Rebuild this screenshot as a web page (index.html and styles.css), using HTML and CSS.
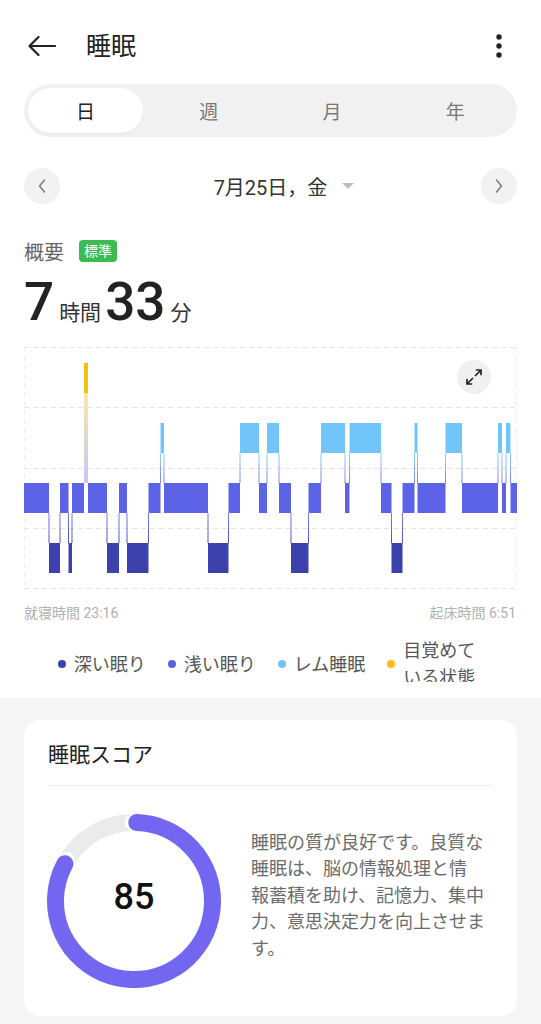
FILE: index.html
```html
<!DOCTYPE html>
<html lang="ja">
<head>
<meta charset="utf-8">
<title>睡眠</title>
<link rel="stylesheet" href="styles.css">
</head>
<body>
<div class="top">
  <header class="topbar">
    <svg class="back" viewBox="0 0 28 20" width="28" height="20"><path d="M1.5 10 H27 M10.5 1 L1.5 10 L10.5 19" fill="none" stroke="#222" stroke-width="2.2" stroke-linecap="round" stroke-linejoin="round"/></svg>
    <h1 class="title">睡眠</h1>
    <svg class="more" viewBox="0 0 8 26" width="8" height="26"><circle cx="4" cy="4" r="2.7" fill="#222"/><circle cx="4" cy="13" r="2.7" fill="#222"/><circle cx="4" cy="22" r="2.7" fill="#222"/></svg>
  </header>

  <nav class="tabs">
    <div class="tab active">日</div>
    <div class="tab">週</div>
    <div class="tab">月</div>
    <div class="tab">年</div>
  </nav>

  <div class="datebar">
    <div class="navbtn"><svg viewBox="0 0 8 14" width="8" height="14"><path d="M6.5 1 L1.5 7 L6.5 13" fill="none" stroke="#777" stroke-width="1.4" stroke-linecap="round" stroke-linejoin="round"/></svg></div>
    <div class="date"><span>7月25日，金</span><span class="caret"></span></div>
    <div class="navbtn"><svg viewBox="0 0 8 14" width="8" height="14"><path d="M1.5 1 L6.5 7 L1.5 13" fill="none" stroke="#777" stroke-width="1.4" stroke-linecap="round" stroke-linejoin="round"/></svg></div>
  </div>

  <section class="summary">
    <div class="overview"><span class="ov-label">概要</span><span class="badge">標準</span></div>
    <div class="duration"><span class="num">7</span><span class="unit">時間</span><span class="num">33</span><span class="unit">分</span></div>
  </section>

  <div class="chart">
    <svg class="hypno" viewBox="24 344 493 248" width="493" height="248">
      <defs>
        <linearGradient id="gLD" x1="0" y1="0" x2="0" y2="1"><stop offset="0" stop-color="#7a7fee"/><stop offset="1" stop-color="#4b50b8"/></linearGradient>
        <linearGradient id="gRL" x1="0" y1="0" x2="0" y2="1"><stop offset="0" stop-color="#93d3fc"/><stop offset="1" stop-color="#7a80ee"/></linearGradient>
        <linearGradient id="gAL" x1="0" y1="0" x2="0" y2="1"><stop offset="0" stop-color="#fde7a6"/><stop offset="1" stop-color="#c3c6f6"/></linearGradient>
      </defs>
      <g stroke="#e4e4e4" stroke-width="1" stroke-dasharray="5 4">
        <line x1="24" y1="347.5" x2="517" y2="347.5"/>
        <line x1="24" y1="407.5" x2="517" y2="407.5"/>
        <line x1="24" y1="468.5" x2="517" y2="468.5"/>
        <line x1="24" y1="528.5" x2="517" y2="528.5"/>
        <line x1="24" y1="588.5" x2="517" y2="588.5"/>
      </g>
      <g stroke="#efefef" stroke-width="1" stroke-dasharray="5 4">
        <line x1="24.5" y1="347" x2="24.5" y2="588"/>
        <line x1="516.5" y1="347" x2="516.5" y2="588"/>
      </g>
      <g fill="url(#gLD)">
        <rect x="48.5" y="513" width="1" height="30"/>
        <rect x="59.5" y="513" width="1" height="30"/>
        <rect x="68" y="513" width="1" height="30"/>
        <rect x="71.5" y="513" width="1" height="30"/>
        <rect x="106.5" y="513" width="1" height="30"/>
        <rect x="118.5" y="513" width="1" height="30"/>
        <rect x="126.5" y="513" width="1" height="30"/>
        <rect x="148" y="513" width="1" height="30"/>
        <rect x="207.5" y="513" width="1" height="30"/>
        <rect x="228" y="513" width="1" height="30"/>
        <rect x="290.5" y="513" width="1" height="30"/>
        <rect x="308" y="513" width="1" height="30"/>
        <rect x="391" y="513" width="1" height="30"/>
        <rect x="402" y="513" width="1" height="30"/>
      </g>
      <g fill="url(#gRL)">
        <rect x="160" y="453" width="1" height="30"/>
        <rect x="163.5" y="453" width="1" height="30"/>
        <rect x="239.5" y="453" width="1" height="30"/>
        <rect x="258.5" y="453" width="1" height="30"/>
        <rect x="266.5" y="453" width="1" height="30"/>
        <rect x="278.5" y="453" width="1" height="30"/>
        <rect x="320.5" y="453" width="1" height="30"/>
        <rect x="344.5" y="453" width="1" height="30"/>
        <rect x="349" y="453" width="1" height="30"/>
        <rect x="380.5" y="453" width="1" height="30"/>
        <rect x="414" y="453" width="1" height="30"/>
        <rect x="417" y="453" width="1" height="30"/>
        <rect x="445" y="453" width="1" height="30"/>
        <rect x="461.5" y="453" width="1" height="30"/>
        <rect x="497.5" y="453" width="1" height="30"/>
        <rect x="501.5" y="453" width="1" height="30"/>
        <rect x="505.5" y="453" width="1" height="30"/>
        <rect x="510" y="453" width="1" height="30"/>
      </g>
      <rect x="84" y="393" width="4" height="90" fill="url(#gAL)"/>
      <g fill="#5d63e6">
        <rect x="24" y="483" width="25" height="30"/>
        <rect x="60" y="483" width="8.5" height="30"/>
        <rect x="72" y="483" width="12" height="30"/>
        <rect x="88" y="483" width="19" height="30"/>
        <rect x="119" y="483" width="8" height="30"/>
        <rect x="148.5" y="483" width="12" height="30"/>
        <rect x="164" y="483" width="44" height="30"/>
        <rect x="228.5" y="483" width="11.5" height="30"/>
        <rect x="259" y="483" width="8" height="30"/>
        <rect x="279" y="483" width="12" height="30"/>
        <rect x="308.5" y="483" width="12.5" height="30"/>
        <rect x="345" y="483" width="4.5" height="30"/>
        <rect x="381" y="483" width="10.5" height="30"/>
        <rect x="402.5" y="483" width="12" height="30"/>
        <rect x="417.5" y="483" width="28" height="30"/>
        <rect x="462" y="483" width="36" height="30"/>
        <rect x="502" y="483" width="4" height="30"/>
        <rect x="510.5" y="483" width="6.5" height="30"/>
      </g>
      <g fill="#3c41ae">
        <rect x="49" y="543" width="11" height="30"/>
        <rect x="68.5" y="543" width="3.5" height="30"/>
        <rect x="107" y="543" width="12" height="30"/>
        <rect x="127" y="543" width="21.5" height="30"/>
        <rect x="208" y="543" width="20.5" height="30"/>
        <rect x="291" y="543" width="17.5" height="30"/>
        <rect x="391.5" y="543" width="11" height="30"/>
      </g>
      <g fill="#72c5fb">
        <rect x="160.5" y="423" width="3.5" height="30"/>
        <rect x="240" y="423" width="19" height="30"/>
        <rect x="267" y="423" width="12" height="30"/>
        <rect x="321" y="423" width="24" height="30"/>
        <rect x="349.5" y="423" width="31.5" height="30"/>
        <rect x="414.5" y="423" width="3" height="30"/>
        <rect x="445.5" y="423" width="16.5" height="30"/>
        <rect x="498" y="423" width="4" height="30"/>
        <rect x="506" y="423" width="4.5" height="30"/>
      </g>
      <rect x="84" y="363" width="4" height="30" fill="#f9bd18"/>
    </svg>
    <button class="expand" type="button" aria-label="expand">
      <svg viewBox="0 0 20 20" width="20" height="20"><path d="M11.5 8.5 L17 3 M12.5 3 H17 V7.5 M8.5 11.5 L3 17 M3 12.5 V17 H7.5" fill="none" stroke="#222" stroke-width="1.7" stroke-linecap="round" stroke-linejoin="round"/></svg>
    </button>
  </div>

  <div class="times"><span>就寝時間 23:16</span><span>起床時間 6:51</span></div>

  <div class="legend-clip">
    <ul class="legend">
      <li><i class="dot deep"></i><span>深い眠り</span></li>
      <li><i class="dot light"></i><span>浅い眠り</span></li>
      <li><i class="dot rem"></i><span>レム睡眠</span></li>
      <li><i class="dot awake"></i><span class="wrap">目覚めている状態</span></li>
    </ul>
  </div>
</div>

<section class="gray">
  <div class="card">
    <h2 class="card-title">睡眠スコア</h2>
    <div class="card-body">
      <div class="ring">
        <svg viewBox="0 0 174 174" width="174" height="174">
          <circle cx="87" cy="87" r="78.5" fill="none" stroke="#ebebeb" stroke-width="17"/>
          <circle cx="87" cy="87" r="78.5" fill="none" stroke="#fff" stroke-width="17" stroke-linecap="round" stroke-dasharray="412.4 600" transform="rotate(-90.5 87 87)"/>
          <circle cx="87" cy="87" r="78.5" fill="none" stroke="#7367f2" stroke-width="17" stroke-linecap="round" stroke-dasharray="405.5 600" transform="rotate(-88 87 87)"/>
        </svg>
        <span class="score">85</span>
      </div>
      <p class="desc">睡眠の質が良好です。良質な<br>睡眠は、脳の情報処理と情<br>報蓄積を助け、記憶力、集中<br>力、意思決定力を向上させま<br>す。</p>
    </div>
  </div>
</section>
</body>
</html>
```
FILE: styles.css
```css
* { box-sizing: border-box; }
html, body { margin: 0; padding: 0; }
body {
  width: 541px;
  height: 1024px;
  overflow: hidden;
  background: #f5f5f5;
  font-family: Roboto, "Noto Sans CJK JP", sans-serif;
  color: #222;
}
.top { background: #fff; padding: 20px 0 16px; }

.topbar {
  height: 52px;
  padding: 0 38px 0 28px;
  display: flex;
  align-items: center;
}
.back { display: block; flex: none; }
.title {
  flex: 1;
  margin: 0 0 0 30px;
  font-size: 25px;
  font-weight: 400;
  line-height: 1;
}
.more { display: block; flex: none; }

.tabs {
  margin: 12px 24px 0;
  height: 53px;
  padding: 4px 0;
  background: #f1f1f1;
  border-radius: 27px;
  display: grid;
  grid-template-columns: repeat(4, 1fr);
}
.tab {
  margin: 0 4px;
  display: flex;
  align-items: center;
  justify-content: center;
  font-size: 19px;
  color: #777;
  border-radius: 23px;
}
.tab.active {
  background: #fff;
  color: #222;
  box-shadow: 0 1px 2px rgba(0,0,0,0.05);
}

.datebar {
  margin: 31px 24px 0;
  height: 36px;
  display: flex;
  align-items: center;
  justify-content: space-between;
}
.navbtn {
  width: 36px;
  height: 36px;
  border-radius: 50%;
  background: #f2f2f2;
  display: flex;
  align-items: center;
  justify-content: center;
}
.navbtn svg { display: block; }
.date {
  display: flex;
  align-items: center;
  gap: 15px;
  padding-left: 27px;
  font-size: 20px;
  color: #333;
}
.caret {
  width: 0;
  height: 0;
  border-left: 6px solid transparent;
  border-right: 6px solid transparent;
  border-top: 6px solid #bdbdbd;
}

.summary { padding: 0 24px; }
.overview {
  margin-top: 35px;
  height: 24px;
  display: flex;
  align-items: center;
  gap: 15px;
}
.ov-label { font-size: 20px; color: #666; }
.badge {
  height: 22px;
  padding: 0 5px;
  border-radius: 4px;
  background: #3cba54;
  color: #fff;
  font-size: 14px;
  line-height: 22px;
}
.duration {
  margin-top: 13px;
  height: 55px;
  display: flex;
  align-items: baseline;
}
.num {
  font-size: 53px;
  line-height: 52px;
  font-weight: 500;
  color: #222;
}
.unit {
  font-size: 21px;
  color: #333;
  margin: 0 4px 0 5px;
}

.chart {
  position: relative;
  margin-top: 13px;
  padding: 0 24px;
}
.hypno { display: block; }
.expand {
  position: absolute;
  top: 16px;
  left: 457px;
  width: 34px;
  height: 34px;
  padding: 0;
  border: 0;
  border-radius: 50%;
  background: #f0f0f0;
  display: flex;
  align-items: center;
  justify-content: center;
}
.expand svg { display: block; }

.times {
  margin-top: 12px;
  padding: 0 25px 0 24px;
  display: flex;
  justify-content: space-between;
  font-size: 14px;
  line-height: 18px;
  color: #b0b0b0;
}

.legend-clip {
  margin-top: 15px;
  height: 45px;
  overflow: hidden;
}
.legend {
  list-style: none;
  margin: 0;
  padding: 0;
  display: flex;
  justify-content: center;
  align-items: center;
  gap: 22px;
}
.legend li {
  display: flex;
  align-items: center;
  gap: 8px;
  font-size: 18px;
  line-height: 27px;
  color: #555;
}
.legend .wrap { width: 80px; }
.dot {
  width: 8px;
  height: 8px;
  border-radius: 50%;
  flex: none;
}
.dot.deep { background: #3c41ae; }
.dot.light { background: #5d63e6; }
.dot.rem { background: #72c5fb; }
.dot.awake { background: #f9bd18; }

.gray { padding: 22px 24px 0; }
.card {
  background: #fff;
  border-radius: 16px;
  padding: 0 24px 28px;
}
.card-title {
  margin: 0;
  height: 66px;
  display: flex;
  align-items: center;
  font-size: 21px;
  font-weight: 400;
  color: #222;
  border-bottom: 1px solid #eeeeee;
}
.card-body {
  padding-top: 28px;
  display: flex;
  align-items: center;
}
.ring {
  position: relative;
  width: 174px;
  height: 174px;
  margin-left: -1px;
  flex: none;
}
.ring svg { display: block; }
.score {
  position: absolute;
  inset: 0;
  display: flex;
  align-items: center;
  justify-content: center;
  font-size: 36px;
  font-weight: 500;
  color: #111;
  padding-bottom: 8px;
}
.desc {
  margin: 0 0 0 30px;
  font-size: 18px;
  line-height: 26.5px;
  color: #6b6b6b;
  white-space: nowrap;
  padding-bottom: 10px;
}
```
